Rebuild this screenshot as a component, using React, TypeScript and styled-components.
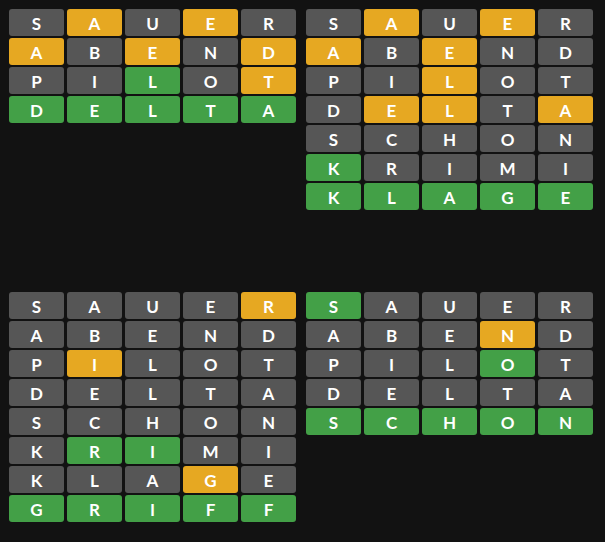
import styled, { createGlobalStyle } from "styled-components";

type TState = "g" | "y" | "x";

type TBoard = {
  words: string[];
  marks: string[];
};

const boards: TBoard[] = [
  {
    words: ["SAUER", "ABEND", "PILOT", "DELTA"],
    marks: ["xyxyx", "yxyxy", "xxgxy", "ggggg"],
  },
  {
    words: ["SAUER", "ABEND", "PILOT", "DELTA", "SCHON", "KRIMI", "KLAGE"],
    marks: ["xyxyx", "yxyxx", "xxyxx", "xyyxy", "xxxxx", "gxxxx", "ggggg"],
  },
  {
    words: [
      "SAUER",
      "ABEND",
      "PILOT",
      "DELTA",
      "SCHON",
      "KRIMI",
      "KLAGE",
      "GRIFF",
    ],
    marks: [
      "xxxxy",
      "xxxxx",
      "xyxxx",
      "xxxxx",
      "xxxxx",
      "xggxx",
      "xxxyx",
      "ggggg",
    ],
  },
  {
    words: ["SAUER", "ABEND", "PILOT", "DELTA", "SCHON"],
    marks: ["gxxxx", "xxxyx", "xxxgx", "xxxxx", "ggggg"],
  },
];

const colors: Record<TState, string> = {
  g: "#43a047",
  y: "#e6a822",
  x: "#565656",
};

const App = () => {
  return (
    <>
      <GlobalStyle />
      <Page>
        {boards.map((board, i) => (
          <Board key={i}>
            {board.words.map((word, r) =>
              word.split("").map((letter, c) => (
                <Tile key={`${r}-${c}`} state={board.marks[r][c] as TState}>
                  {letter}
                </Tile>
              ))
            )}
          </Board>
        ))}
      </Page>
    </>
  );
};

export default App;

const GlobalStyle = createGlobalStyle`
  html, body {
    margin: 0;
    padding: 0;
    background: #121212;
  }
  body {
    font-family: "Lato", "DejaVu Sans", sans-serif;
  }
`;

const Page = styled.main`
  display: grid;
  grid-template-columns: 287px 287px;
  column-gap: 10px;
  row-gap: 24px;
  padding: 9px 12px 0 9px;
  min-height: 542px;
  box-sizing: border-box;
`;

const Board = styled.section`
  display: grid;
  grid-template-columns: repeat(5, 55px);
  grid-auto-rows: 27px;
  column-gap: 3px;
  row-gap: 2px;
  min-height: 259px;
  align-content: start;
`;

const Tile = styled.div<{ state: TState }>`
  background-color: ${({ state }) => colors[state]};
  border-radius: 3px;
  color: #fff;
  font-size: 17px;
  font-weight: 700;
  padding-top: 1px;
  box-sizing: border-box;
  display: flex;
  align-items: center;
  justify-content: center;
  user-select: none;
`;
